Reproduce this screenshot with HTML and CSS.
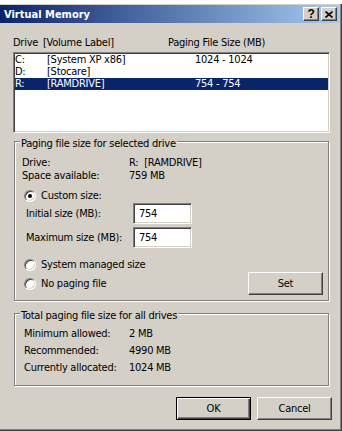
FILE: index.html
```html
<!DOCTYPE html>
<html>
  <head>
    <title>Virtual Memory</title>
    <meta charset="UTF-8">
    <meta name="viewport" content="width=device-width, initial-scale=1.0">
    <link rel="stylesheet" href="styles.css">
  </head>
  <body>
    <div class="behind"></div>
    <div class="window">
      <div class="titlebar">
        <span class="title">Virtual Memory</span>
        <div class="caption-buttons">
          <span class="cap-btn help">?</span>
          <span class="cap-btn close">
            <svg width="8" height="7" viewBox="0 0 8 7">
              <path d="M0.5 0.5 L7.5 6.5 M7.5 0.5 L0.5 6.5" stroke="#000" stroke-width="1.6"/>
            </svg>
          </span>
        </div>
      </div>

      <div class="dialog">
        <div class="list-head">
          <span class="col-drive">Drive</span>
          <span class="col-label">[Volume Label]</span>
          <span>Paging File Size (MB)</span>
        </div>
        <div class="listbox">
          <div class="row"><span class="c-drive">C:</span><span class="c-label">[System XP x86]</span><span>1024 - 1024</span></div>
          <div class="row"><span class="c-drive">D:</span><span class="c-label">[Stocare]</span><span></span></div>
          <div class="row selected"><span class="c-drive">R:</span><span class="c-label">[RAMDRIVE]</span><span>754 - 754</span></div>
        </div>

        <div class="group group-drive">
          <span class="legend">Paging file size for selected drive</span>
          <div class="info"><span class="key">Drive:</span><span>R:&nbsp;&nbsp;[RAMDRIVE]</span></div>
          <div class="info"><span class="key">Space available:</span><span>759 MB</span></div>
          <div class="option custom"><span class="radio checked"></span>Custom size:</div>
          <div class="size-row"><span class="key">Initial size (MB):</span><span class="field">754</span></div>
          <div class="size-row"><span class="key">Maximum size (MB):</span><span class="field">754</span></div>
          <div class="option system"><span class="radio"></span>System managed size</div>
          <div class="last-row">
            <div class="option"><span class="radio"></span>No paging file</div>
            <span class="btn">Set</span>
          </div>
        </div>

        <div class="group group-total">
          <span class="legend">Total paging file size for all drives</span>
          <div class="total-row"><span class="key">Minimum allowed:</span><span>2 MB</span></div>
          <div class="total-row"><span class="key">Recommended:</span><span>4990 MB</span></div>
          <div class="total-row"><span class="key">Currently allocated:</span><span>1024 MB</span></div>
        </div>

        <div class="actions">
          <span class="btn default">OK</span>
          <span class="btn">Cancel</span>
        </div>
      </div>
    </div>
  </body>
</html>
```

FILE: styles.css
```css
* {
  box-sizing: border-box;
}

html, body {
  margin: 0;
  height: 100%;
  background-color: #fff;
  font-family: "DejaVu Sans Condensed", "Liberation Sans", Arial, sans-serif;
  font-size: 11px;
  letter-spacing: -0.25px;
  color: #000;
}

.behind {
  height: 4px;
  background-color: #fff;
}

.window {
  height: 427px;
  padding: 1px 2px 0 0;
  background-color: #d4d0c8;
  border-right: 1px solid #404040;
  border-bottom: 1px solid #404040;
  box-shadow: inset -1px -1px 0 #808080;
}

/* title bar */
.titlebar {
  display: flex;
  align-items: center;
  justify-content: space-between;
  height: 18px;
  padding: 0 2px 0 4px;
  background: linear-gradient(to right, #0a246a, #a6caf0);
}

.title {
  color: #fff;
  font-weight: bold;
  font-size: 11px;
  letter-spacing: 0;
}

.caption-buttons {
  display: flex;
  gap: 2px;
}

.cap-btn {
  display: flex;
  justify-content: center;
  align-items: center;
  width: 16px;
  height: 14px;
  background-color: #d4d0c8;
  border: 1px solid;
  border-color: #fff #404040 #404040 #fff;
  box-shadow: inset -1px -1px 0 #808080;
}

.help {
  font-family: "Liberation Sans", Arial, sans-serif;
  font-weight: bold;
  font-size: 12px;
  line-height: 12px;
}

/* dialog body */
.dialog {
  padding: 13px 9px 0 13px;
}

.list-head {
  display: flex;
  line-height: 13px;
}

.col-drive {
  width: 30px;
}

.col-label {
  width: 125px;
}

.listbox {
  height: 81px;
  margin-top: 3px;
  padding: 1px;
  background-color: #fff;
  border: 1px solid;
  border-color: #808080 #fff #fff #808080;
  box-shadow: inset 1px 1px 0 #404040, inset -1px -1px 0 #d4d0c8;
}

.row {
  display: flex;
  height: 12px;
  line-height: 12px;
}

.row.selected {
  background-color: #0a246a;
  color: #fff;
}

.c-drive {
  width: 32px;
}

.c-label {
  width: 148px;
}

/* group boxes */
.group {
  position: relative;
  margin: 8px 1px 0 1px;
  border: 1px solid #808080;
  box-shadow: 1px 1px 0 #fff, inset 1px 1px 0 #fff;
}

.legend {
  position: absolute;
  top: -5px;
  left: 5px;
  padding: 0 1px;
  line-height: 13px;
  background-color: #d4d0c8;
}

.group-drive {
  padding: 14px 5px 5px 7px;
}

.info {
  display: flex;
  line-height: 13px;
}

.key {
  width: 107px;
}

.option {
  display: flex;
  align-items: center;
  height: 13px;
}

.option.custom {
  margin-top: 7px;
}

.option.system {
  margin-top: 10px;
}

.radio {
  position: relative;
  width: 12px;
  height: 12px;
  margin: 0 5px 0 2px;
  border-radius: 50%;
  background-color: #fff;
  border: 1px solid;
  border-color: #808080 #fff #fff #808080;
  box-shadow: inset 1px 1px 0 #404040, inset -1px -1px 0 #d4d0c8;
}

.radio.checked::after {
  content: "";
  position: absolute;
  top: 3px;
  left: 3px;
  width: 4px;
  height: 4px;
  border-radius: 50%;
  background-color: #000;
}

.size-row {
  display: flex;
  align-items: center;
  margin-top: 1px;
  padding-left: 4px;
}

.size-row + .size-row {
  margin-top: 3px;
}

.field {
  width: 59px;
  height: 21px;
  padding: 0 5px;
  line-height: 19px;
  background-color: #fff;
  border: 1px solid;
  border-color: #808080 #fff #fff #808080;
  box-shadow: inset 1px 1px 0 #404040, inset -1px -1px 0 #d4d0c8;
}

.last-row {
  display: flex;
  justify-content: space-between;
  align-items: center;
  margin-top: 1px;
}

.btn {
  display: block;
  width: 75px;
  height: 23px;
  line-height: 21px;
  text-align: center;
  background-color: #d4d0c8;
  border: 1px solid;
  border-color: #fff #404040 #404040 #fff;
  box-shadow: inset -1px -1px 0 #808080;
}

.btn.default {
  border: 1px solid #000;
  box-shadow: inset 1px 1px 0 #fff, inset -1px -1px 0 #404040, inset -2px -2px 0 #808080;
}

.group-total {
  margin-top: 12px;
  padding: 11px 0 9px 9px;
}

.total-row {
  display: flex;
  line-height: 17px;
}

.total-row .key {
  width: 105px;
}

.actions {
  display: flex;
  justify-content: flex-end;
  gap: 6px;
  margin: 11px -2px 0 0;
}
```
